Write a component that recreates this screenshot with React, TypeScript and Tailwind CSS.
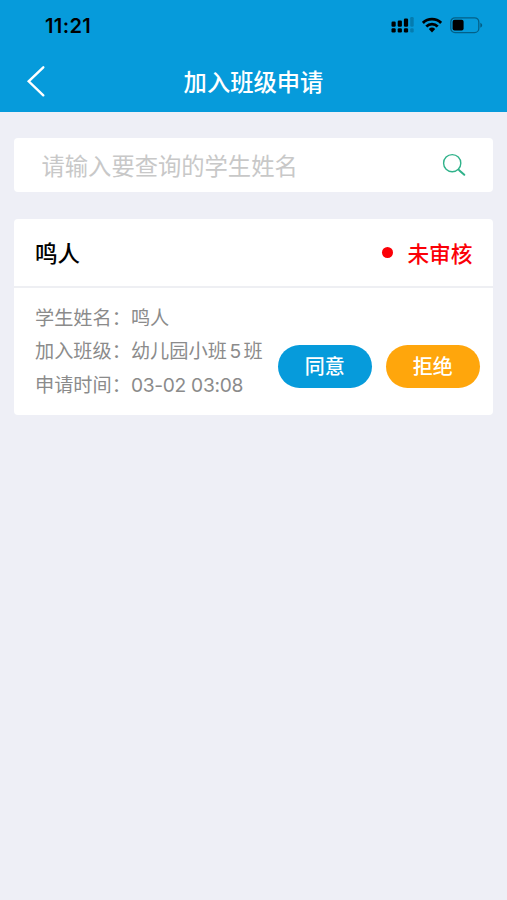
import { useState } from "react";

const applications = [
  {
    name: "鸣人",
    status: "未审核",
    classPrefix: "幼儿园小班",
    classNumber: "5",
    classSuffix: "班",
    time: "03-02 03:08",
  },
];

function StatusBar() {
  return (
    <div className="flex h-[50px] items-center justify-between pl-[45px] pr-[23px] text-black">
      <span className="pt-px text-[20px] font-semibold leading-none tracking-[0.4px]">11:21</span>
      <div className="flex items-center">
        <svg width="24" height="18" viewBox="0 0 24 18" fill="currentColor">
          <rect x="0.5" y="5.5" width="4.2" height="5.2" rx="1.2" />
          <rect x="6.7" y="4.5" width="4.2" height="6.2" rx="1.2" />
          <rect x="12.9" y="2.5" width="4.2" height="8.2" rx="1.2" />
          <rect x="19.2" y="1" width="3.5" height="9.7" rx="1.2" opacity="0.2" />
          <rect x="0.5" y="12.3" width="4.2" height="4.2" rx="1.2" />
          <rect x="6.7" y="12.3" width="4.2" height="4.2" rx="1.2" />
          <rect x="12.9" y="12.3" width="4.2" height="4.2" rx="1.2" />
          <rect x="19.2" y="12.3" width="3.5" height="4.2" rx="1.2" opacity="0.2" />
        </svg>
        <svg className="ml-[7px]" width="20" height="16" viewBox="0 0 20 16" fill="none" stroke="currentColor" strokeWidth="2.8">
          <path d="M0.9 5.9a13 13 0 0 1 18.2 0" />
          <path d="M4.3 9.4a8.2 8.2 0 0 1 11.4 0" />
          <path d="M6.8 12.1a4.7 4.7 0 0 1 6.4 0L10 15.4z" fill="currentColor" stroke="none" />
        </svg>
        <svg className="ml-[8px]" width="34" height="17" viewBox="0 0 34 17" fill="none">
          <rect x="0.8" y="0.8" width="28" height="14.8" rx="4.2" stroke="currentColor" strokeOpacity="0.38" strokeWidth="1.3" />
          <rect x="2.6" y="2.8" width="11" height="10.8" rx="2" fill="currentColor" />
          <path d="M30.3 5.8v5c1-.4 1.9-1.3 1.9-2.5s-.9-2.1-1.9-2.5z" fill="currentColor" fillOpacity="0.4" />
        </svg>
      </div>
    </div>
  );
}

function Field({ label, children }: { label: string; children: React.ReactNode }) {
  return (
    <div className="flex h-[33.5px] items-center whitespace-nowrap">
      <span>{label}：</span>
      <span>{children}</span>
    </div>
  );
}

export default function App() {
  const [keyword, setKeyword] = useState("");

  return (
    <div className="min-h-[900px] bg-[#eeeff6] font-['Inter','Noto_Sans_CJK_SC',sans-serif]">
      <header className="h-[112px] bg-[#069bdb]">
        <StatusBar />
        <div className="grid h-[62px] grid-cols-[1fr_auto_1fr] items-center">
          <button type="button" aria-label="返回" className="ml-[26px] w-6">
            <svg width="20" height="32" viewBox="0 0 20 32" fill="none" stroke="white" strokeWidth="2.4" strokeLinecap="round">
              <path d="M17.3 2.3L2.7 16.3l14.6 14" />
            </svg>
          </button>
          <h1 className="pt-[4px] text-[23.3px] font-medium leading-none text-white">加入班级申请</h1>
        </div>
      </header>

      <main className="px-[14px] pt-[26px]">
        <div className="flex h-[54px] items-center rounded bg-white pl-[27.5px] pr-[27.5px]">
          <input
            className="min-w-0 flex-1 pt-[4px] text-[23.3px] text-gray-700 outline-none placeholder:text-[#c8c8c8]"
            placeholder="请输入要查询的学生姓名"
            value={keyword}
            onChange={(event) => setKeyword(event.target.value)}
          />
          <svg width="24" height="24" viewBox="0 0 24 24" fill="none" stroke="#2fb28a" strokeLinecap="round">
            <circle cx="10.2" cy="10.2" r="8.6" strokeWidth="1.4" />
            <path d="M16.3 16.4l1 .9" strokeWidth="1.4" />
            <path d="M17.4 17.4l4.9 4.4" strokeWidth="2" />
          </svg>
        </div>

        {applications.map((item) => (
          <section key={item.name} className="mt-[27px] overflow-hidden rounded bg-white">
            <div className="flex h-[69px] items-center justify-between border-b-2 border-[#eeeff3] pl-[21px] pr-[20.5px]">
              <h2 className="pt-[4px] text-[22.5px] font-medium leading-none text-black">{item.name}</h2>
              <div className="flex items-center text-[21.7px] font-medium leading-none text-[#fb0007]">
                <span className="mr-[14px] h-[11px] w-[11px] rounded-full bg-[#fb0007]" />
                <span className="pt-[4px]">{item.status}</span>
              </div>
            </div>
            <div className="flex h-[127px] justify-between pl-[21px] pr-[13px] pt-[13.5px]">
              <div className="text-[19.2px] text-[#8b8b8b]">
                <Field label="学生姓名">{item.name}</Field>
                <Field label="加入班级">
                  {item.classPrefix}
                  <span className="mx-[2.5px]">{item.classNumber}</span>
                  {item.classSuffix}
                </Field>
                <Field label="申请时间">
                  <span className="tracking-[-0.3px]">{item.time}</span>
                </Field>
              </div>
              <div className="mt-[43.5px] flex h-[43px] gap-[13.5px] text-[20px] font-medium text-white">
                <button type="button" className="w-[94.5px] rounded-full bg-[#069bdb]">同意</button>
                <button type="button" className="w-[94.5px] rounded-full bg-[#ffa60c]">拒绝</button>
              </div>
            </div>
          </section>
        ))}
      </main>
    </div>
  );
}
